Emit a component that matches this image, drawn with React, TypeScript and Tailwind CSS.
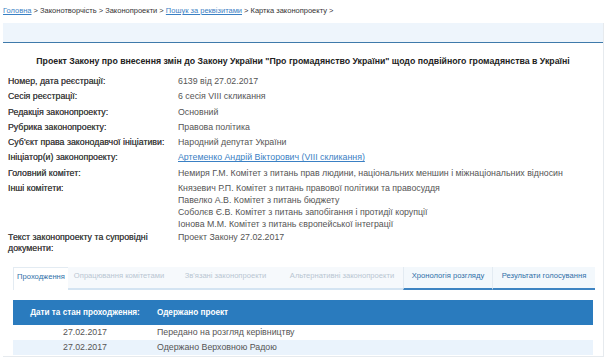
const rows: { label: string; value: string[]; link?: boolean }[] = [
  { label: "Номер, дата реєстрації:", value: ["6139 від 27.02.2017"] },
  { label: "Сесія реєстрації:", value: ["6 сесія VIII скликання"] },
  { label: "Редакція законопроекту:", value: ["Основний"] },
  { label: "Рубрика законопроекту:", value: ["Правова політика"] },
  { label: "Суб'єкт права законодавчої ініціативи:", value: ["Народний депутат України"] },
  { label: "Ініціатор(и) законопроекту:", value: ["Артеменко Андрій Вікторович (VIII скликання)"], link: true },
  {
    label: "Головний комітет:",
    value: ["Немиря Г.М. Комітет з питань прав людини, національних меншин і міжнаціональних відносин"],
  },
  {
    label: "Інші комітети:",
    value: [
      "Князевич Р.П. Комітет з питань правової політики та правосуддя",
      "Павелко А.В. Комітет з питань бюджету",
      "Соболєв Є.В. Комітет з питань запобігання і протидії корупції",
      "Іонова М.М. Комітет з питань європейської інтеграції",
    ],
  },
];

const tabs = [
  { name: "Проходження", kind: "active", w: "w-[55px]" },
  { name: "Опрацювання комітетами", kind: "off", w: "w-[102px]" },
  { name: "Зв'язані законопроекти", kind: "off", w: "w-[111px]" },
  { name: "Альтернативні законопроекти", kind: "off", w: "w-[122px]" },
  { name: "Хронологія розгляду", kind: "on", w: "w-[89px]" },
  { name: "Результати голосування", kind: "on", w: "w-[103px]" },
];

export default function App() {
  return (
    <div className="w-[606px] h-[360px] overflow-hidden bg-white font-['Liberation_Sans',Arial,sans-serif] text-[#555]">
      {/* breadcrumb */}
      <div className="h-[23px] pl-[3px] pt-[5px] text-[7.5px] leading-[12px] text-[#333]">
        <a className="text-[#3a80c4] underline">Головна</a> &gt; Законотворчість &gt; Законопроекти &gt;{" "}
        <a className="text-[#3a80c4] underline">Пошук за реквізитами</a> &gt; Картка законопроекту &gt;
      </div>

      <div className="ml-[3px] mr-[2px] h-[334px] border-r border-b border-[#e6eaee]">
        <div className="h-[20px] bg-[#eef5fc] border-b border-[#3f7aab]" />

        <div className="pt-[12px] text-center text-[8.75px] font-bold leading-[12px] text-[#222]">
          Проект Закону про внесення змін до Закону України "Про громадянство України" щодо подвійного громадянства в Україні
        </div>

        <div className="pl-[5px] pt-[8px] text-[8.8px] leading-[12px]">
          {rows.map((r) => (
            <div key={r.label} className="flex mb-[3.3px]">
              <div className="w-[170px] shrink-0 text-[#444] [text-shadow:0_0_0.2px_#444]">{r.label}</div>
              <div>
                {r.value.map((v) =>
                  r.link ? (
                    <div key={v} className="text-[#3a80c4] underline">{v}</div>
                  ) : (
                    <div key={v}>{v}</div>
                  )
                )}
              </div>
            </div>
          ))}
          <div className="flex -mt-[1px]">
            <div className="w-[170px] shrink-0 text-[#444] leading-[11px] [text-shadow:0_0_0.2px_#444]">
              Текст законопроекту та супровідні документи:
            </div>
            <div className="leading-[11px]">Проект Закону 27.02.2017</div>
          </div>
        </div>

        {/* tabs */}
        <div className="mt-[13px] ml-[10px] flex text-[7.6px] leading-[17px]">
          {tabs.map((t) => (
            <div
              key={t.name}
              className={
                t.kind === "active"
                  ? `${t.w} h-[23px] text-center bg-white text-[#2f6fa8] border-l border-t border-[#e3ebf2]`
                  : t.kind === "on"
                  ? `${t.w} h-[23px] text-center bg-[#f3f8fc] text-[#2f6fa8] border-l border-[#e3ebf2] border-b-2 border-b-[#3e84c2]`
                  : `${t.w} h-[23px] text-center bg-[#f6f9fc] text-[#b9c6d2] border-b-2 border-b-[#d4e4f2]`
              }
            >
              {t.name}
            </div>
          ))}
        </div>

        {/* table */}
        <div className="mt-[10px] ml-[10px] w-[580px] text-[8.8px]">
          <div className="flex h-[25px] items-center bg-[#2a7bbe] text-white font-bold text-[8.2px]">
            <div className="w-[144px] text-center">Дати та стан проходження:</div>
            <div>Одержано проект</div>
          </div>
          <div className="flex h-[15px] items-center">
            <div className="w-[144px] text-center">27.02.2017</div>
            <div>Передано на розгляд керівництву</div>
          </div>
          <div className="flex h-[15px] items-center bg-[#eaf3fc]">
            <div className="w-[144px] text-center">27.02.2017</div>
            <div>Одержано Верховною Радою</div>
          </div>
        </div>
      </div>
    </div>
  );
}
